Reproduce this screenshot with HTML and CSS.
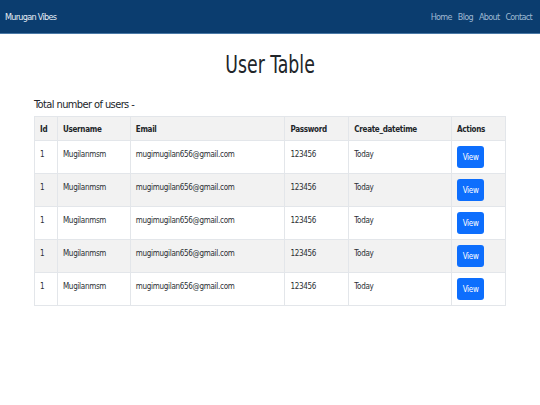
FILE: index.html
```html
<!DOCTYPE html>
<html>
<head>
<meta charset="utf-8">
<link rel="stylesheet" href="styles.css">
</head>
<body>
<nav class="navbar">
  <span class="brand">Murugan Vibes</span>
  <ul class="links">
    <li>Home</li>
    <li>Blog</li>
    <li>About</li>
    <li>Contact</li>
  </ul>
</nav>
<main class="content">
  <h1 class="title"><span class="title-text">User Table</span></h1>
  <p class="total">Total number of users -</p>
  <table class="users">
    <thead>
      <tr>
        <th class="c-id">Id</th>
        <th class="c-user">Username</th>
        <th class="c-email">Email</th>
        <th class="c-pass">Password</th>
        <th class="c-date">Create_datetime</th>
        <th class="c-act">Actions</th>
      </tr>
    </thead>
    <tbody>
      <tr><td>1</td><td>Mugilanmsm</td><td>mugimugilan656@gmail.com</td><td>123456</td><td>Today</td><td><button class="btn">View</button></td></tr>
      <tr><td>1</td><td>Mugilanmsm</td><td>mugimugilan656@gmail.com</td><td>123456</td><td>Today</td><td><button class="btn">View</button></td></tr>
      <tr><td>1</td><td>Mugilanmsm</td><td>mugimugilan656@gmail.com</td><td>123456</td><td>Today</td><td><button class="btn">View</button></td></tr>
      <tr><td>1</td><td>Mugilanmsm</td><td>mugimugilan656@gmail.com</td><td>123456</td><td>Today</td><td><button class="btn">View</button></td></tr>
      <tr><td>1</td><td>Mugilanmsm</td><td>mugimugilan656@gmail.com</td><td>123456</td><td>Today</td><td><button class="btn">View</button></td></tr>
    </tbody>
  </table>
</main>
</body>
</html>
```

FILE: styles.css
```css
* { box-sizing: border-box; }
html, body {
  margin: 0;
  padding: 0;
  background: #ffffff;
  font-family: "DejaVu Sans Condensed", "DejaVu Sans", sans-serif;
  color: #212529;
}
.navbar {
  height: 34px;
  background: #0b3d6f;
  border-bottom: 1px solid #4a79a6;
  display: flex;
  align-items: center;
  justify-content: space-between;
  padding: 0 8px 0 5px;
}
.brand {
  color: #e6eef6;
  font-size: 9px;
  letter-spacing: -0.7px;
}
.links {
  list-style: none;
  margin: 0;
  padding: 0;
  display: flex;
  gap: 6px;
  color: #9fb8d2;
  font-size: 9px;
  letter-spacing: -0.7px;
}
.content {
  padding: 0 34px;
}
.title {
  margin: 16px 0 0 0;
  text-align: center;
  font-weight: 400;
  font-size: 25px;
  line-height: 30px;
  color: #212529;
}
.title-text {
  display: inline-block;
  transform: scaleX(0.77);
}
.total {
  margin: 18px 0 5px 0;
  font-size: 11px;
  line-height: 13px;
  letter-spacing: -0.6px;
}
.users {
  width: 472px;
  border-collapse: collapse;
  border: 1px solid #e3e6ea;
  font-size: 8px;
  letter-spacing: -0.3px;
  color: #2b2f33;
}
.users th, .users td {
  border: 1px solid #e3e6ea;
  text-align: left;
  vertical-align: top;
  padding: 9px 4px 0 5px;
}
.users th {
  height: 24px;
  font-weight: 700;
  padding-top: 8px;
  background: #f2f2f2;
  color: #212529;
}
.users td {
  height: 33px;
}
.users td:last-child {
  padding: 5px 5px 0 5px;
}
.users tbody tr:nth-child(even) td {
  background: #f2f2f2;
}
.c-id { width: 23px; }
.c-user { width: 73px; }
.c-email { width: 155px; }
.c-pass { width: 64px; }
.c-date { width: 103px; }
.c-act { width: 54px; }
.btn {
  display: block;
  width: 27px;
  height: 22px;
  padding: 0;
  border: none;
  border-radius: 3px;
  background: #0d6efd;
  color: #ffffff;
  font-family: "DejaVu Sans Condensed", "DejaVu Sans", sans-serif;
  font-size: 8px;
  letter-spacing: -0.3px;
}
```
